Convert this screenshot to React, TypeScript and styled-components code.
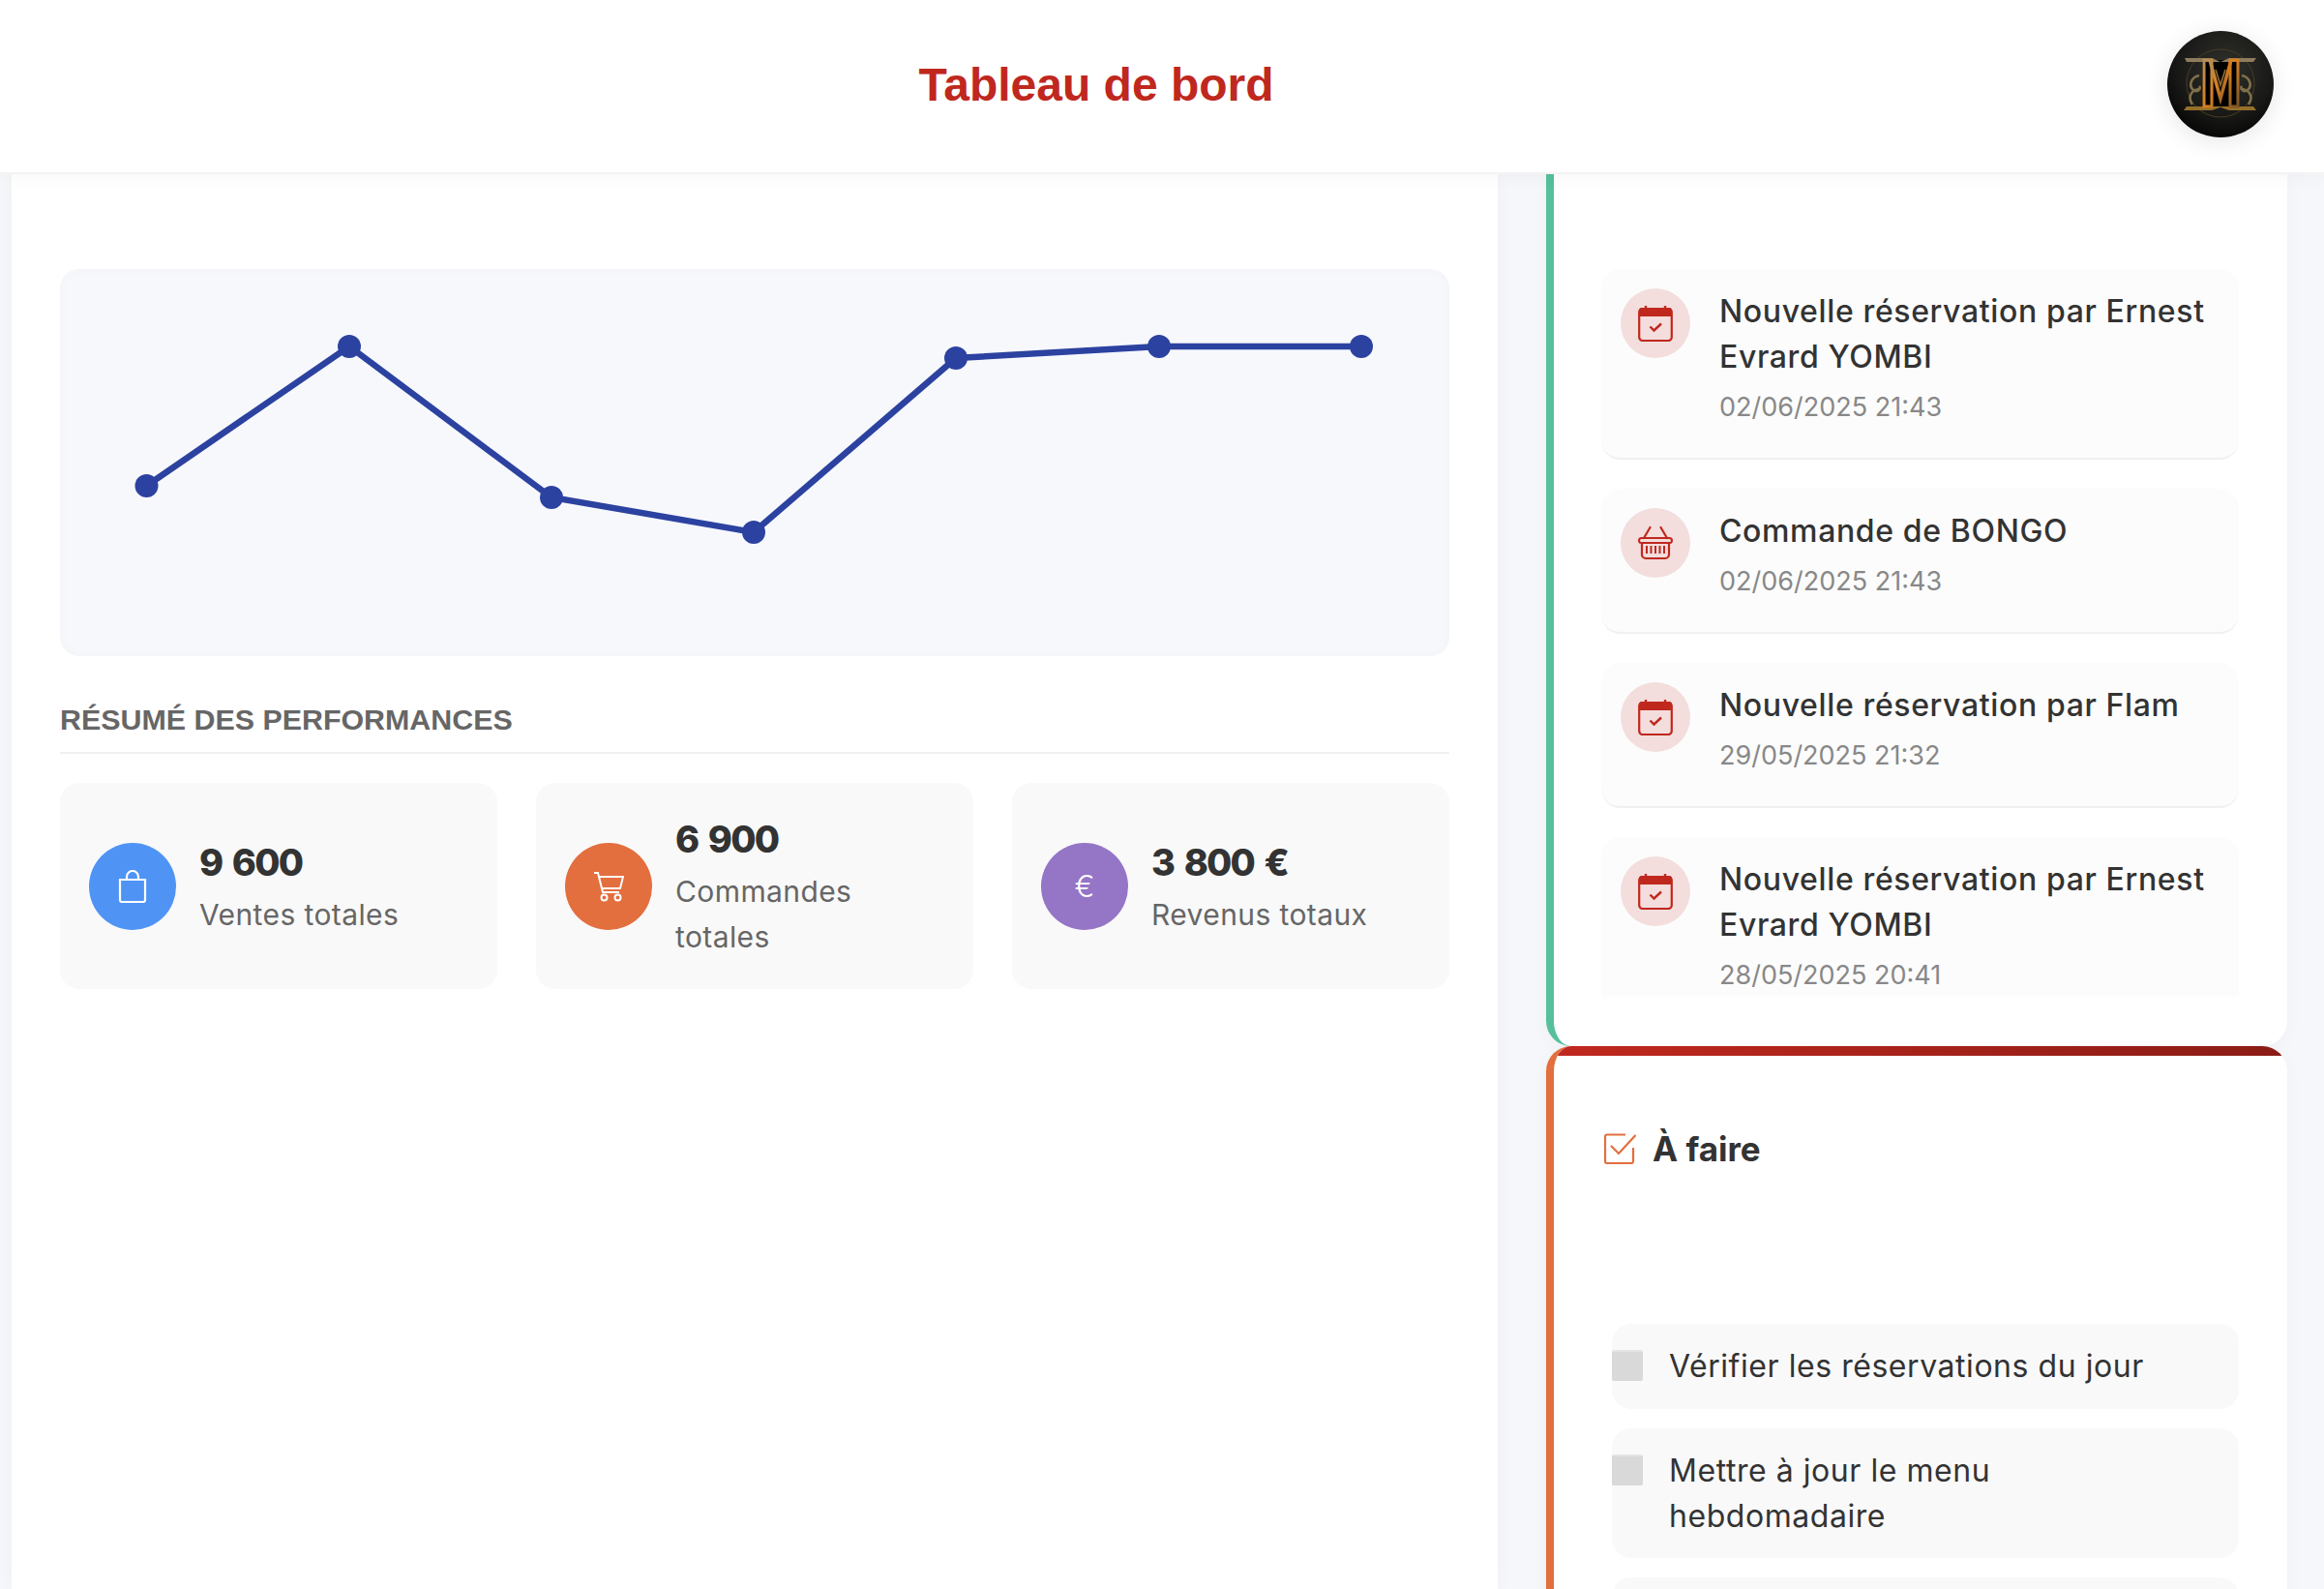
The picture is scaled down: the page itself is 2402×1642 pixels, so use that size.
import React from "react";
import styled, { createGlobalStyle } from "styled-components";

const GlobalStyle = createGlobalStyle`
  * {
    box-sizing: border-box;
  }

  html,
  body {
    margin: 0;
    height: 1642px;
    overflow: hidden;
    background: #f5f7fa;
    font-family: "Inter", "Noto Sans", sans-serif;
  }
`;

const Header = styled.header`
  position: relative;
  z-index: 2;
  display: flex;
  align-items: center;
  height: 180px;
  padding: 0 52px;
  border-bottom: 2px solid #f3f3f3;
  background: #fff;
  box-shadow: 0 2px 20px rgba(0, 0, 0, 0.04);
`;

const PageTitle = styled.h1`
  flex: 1;
  margin: 0 26px 3px 0;
  font-family: "Liberation Sans", Arial, sans-serif;
  font-size: 48px;
  font-weight: 700;
  text-align: center;
  color: #c0281e;
`;

const Avatar = styled.div`
  width: 110px;
  height: 110px;
  margin-bottom: 4px;
  border-radius: 50%;
  box-shadow: 0 4px 24px rgba(0, 0, 0, 0.1);
  overflow: hidden;

  svg {
    display: block;
  }
`;

const Dashboard = styled.main`
  display: grid;
  grid-template-columns: 2fr 1fr;
  gap: 50px;
  padding: 0 38px 0 12px;
`;

const MainPanel = styled.section`
  height: 1462px;
  padding: 98px 50px 0;
  background: #fff;
  box-shadow: 0 4px 20px rgba(0, 0, 0, 0.03);
`;

const ChartBox = styled.div`
  height: 400px;
  border-radius: 20px;
  background: #f7f8fc;
  box-shadow: inset 0 0 12px rgba(0, 0, 0, 0.025);

  svg {
    display: block;
    filter: blur(0.5px);
  }
`;

const SectionTitle = styled.h2`
  margin: 42px 0 30px;
  padding-bottom: 11px;
  border-bottom: 2px solid #f0f0f0;
  font-family: "Liberation Sans", Arial, sans-serif;
  font-size: 30.4px;
  font-weight: 700;
  line-height: 46px;
  text-transform: uppercase;
  color: #666;
`;

const StatGrid = styled.div`
  display: grid;
  grid-template-columns: repeat(3, 1fr);
  gap: 40px;
`;

const StatCard = styled.article`
  display: flex;
  align-items: center;
  gap: 24px;
  padding: 30px;
  border-radius: 20px;
  background: #f9f9f9;
`;

const StatIcon = styled.div<{ $color: string }>`
  display: flex;
  flex: none;
  align-items: center;
  justify-content: center;
  width: 90px;
  height: 90px;
  border-radius: 50%;
  background: ${({ $color }) => $color};
  color: #fff;
  font-size: 31px;
  font-weight: 300;
`;

const StatValue = styled.div`
  margin-bottom: 3px;
  font-size: 38px;
  font-weight: 800;
  line-height: 56px;
  letter-spacing: -1.8px;
  word-spacing: 4px;
  color: #333;
`;

const StatLabel = styled.div`
  max-width: 250px;
  font-size: 30px;
  line-height: 47px;
  letter-spacing: 0.4px;
  color: #666;
`;

const SideColumn = styled.aside`
  display: flex;
  flex-direction: column;
`;

const ActivityPanel = styled.section`
  flex: none;
  height: 901px;
  padding: 98px 50px 0 49px;
  border-left: 8px solid #56c09a;
  border-radius: 0 0 26px 26px;
  background: #fff;
  box-shadow: 0 4px 20px rgba(0, 0, 0, 0.03);
`;

const ActivityList = styled.div`
  display: flex;
  flex-direction: column;
  gap: 30px;
  height: 752px;
  overflow: hidden;
`;

const ActivityItem = styled.article`
  display: flex;
  flex: none;
  gap: 30px;
  padding: 20px 20px 29px;
  border-bottom: 2px solid #f0f0f0;
  border-radius: 20px;
  background: #fcfcfc;
`;

const ActivityIcon = styled.div`
  display: flex;
  flex: none;
  align-items: center;
  justify-content: center;
  width: 72px;
  height: 72px;
  border-radius: 50%;
  background: #f3dddd;
`;

const ActivityTitle = styled.div`
  margin-bottom: 6px;
  font-size: 32px;
  font-weight: 500;
  line-height: 47px;
  letter-spacing: 0.63px;
  color: #333;
`;

const ActivityDate = styled.div`
  font-size: 27px;
  line-height: 46px;
  color: #888;
`;

const TodoPanel = styled.section`
  position: relative;
  flex: 1;
  padding: 78px 50px 0 49px;
  border-left: 8px solid #e36e3e;
  border-radius: 26px 26px 0 0;
  background: #fff;
  overflow: hidden;
  box-shadow: 0 4px 20px rgba(0, 0, 0, 0.03);

  &::before {
    content: "";
    position: absolute;
    top: 0;
    left: 0;
    right: 0;
    height: 10px;
    background: linear-gradient(90deg, #c0281e, #8a1c16);
  }
`;

const TodoHeading = styled.h3`
  display: flex;
  align-items: center;
  gap: 16px;
  height: 56px;
  margin: 0 0 153px 3px;
  font-size: 35px;
  font-weight: 700;
  color: #333;

  svg {
    flex: none;
  }
`;

const TodoList = styled.div`
  display: flex;
  flex-direction: column;
  gap: 20px;
  margin-left: 11px;
`;

const TodoItem = styled.label`
  display: flex;
  gap: 27px;
  min-height: 88px;
  padding: 20px 40px 20px 0;
  border-radius: 20px;
  background: #f9f9f9;
  font-size: 32px;
  line-height: 47px;
  letter-spacing: 0.55px;
  color: #333;
`;

const TodoCheck = styled.input`
  flex: none;
  width: 32px;
  height: 32px;
  margin: 7px 0 0;
  appearance: none;
  border-top: 2px solid #e4e4e4;
  border-radius: 2px;
  background: #d9d9d9;
`;

const chartPoints = [
  [89.5, 224],
  [299, 80],
  [508, 236],
  [717, 272],
  [926, 92],
  [1136, 80],
  [1345, 80],
];

const LineChart = () => (
  <svg width="1436" height="400" viewBox="0 0 1436 400">
    <polyline
      points={chartPoints.map((p) => p.join(",")).join(" ")}
      fill="none"
      stroke="#2c42a0"
      strokeWidth="6.5"
    />
    {chartPoints.map(([x, y]) => (
      <circle key={x} cx={x} cy={y} r="12" fill="#2c42a0" />
    ))}
  </svg>
);

const CalendarIcon = () => (
  <svg width="36" height="38" viewBox="0 0 36 38" fill="none">
    <path d="M8 1v5M28 1v5" stroke="#c0281e" strokeWidth="2.4" />
    <path d="M4 3h28a3 3 0 0 1 3 3v6H1V6a3 3 0 0 1 3-3z" fill="#c0281e" />
    <rect x="1.2" y="4" width="33.6" height="33" rx="3.5" stroke="#c0281e" strokeWidth="2.2" />
    <path d="M12.5 22.5l4 4 7.5-7" stroke="#c0281e" strokeWidth="2.4" />
  </svg>
);

const BasketIcon = () => (
  <svg width="36" height="36" viewBox="0 0 36 36" fill="none" stroke="#c0281e">
    <path d="M6 13L12.500 2M30 13L23.500 2" strokeWidth="2.2" strokeLinecap="round" />
    <rect x="1" y="13" width="34" height="5" rx="2.5" strokeWidth="2" />
    <path d="M4 18v12a4 4 0 0 0 4 4h20a4 4 0 0 0 4-4V18" strokeWidth="2.2" />
    <path d="M9 21v8M13.5 21v8M18 21v8M22.5 21v8M27 21v8" strokeWidth="2" />
  </svg>
);

const BagIcon = () => (
  <svg width="30" height="34" viewBox="0 0 30 34" fill="none" stroke="#fff" strokeWidth="2.2">
    <path d="M2 10h26v21a2 2 0 0 1-2 2H4a2 2 0 0 1-2-2z" />
    <path d="M9 10V7a6 6 0 0 1 12 0v3" />
  </svg>
);

const CartIcon = () => (
  <svg width="32" height="32" viewBox="0 0 32 32" fill="none" stroke="#fff" strokeWidth="2">
    <path d="M1 2h4l5 20h17" />
    <path d="M6 6h25l-3 12H9" />
    <circle cx="11.5" cy="27.5" r="3" />
    <circle cx="25.5" cy="27.5" r="3" />
  </svg>
);

const TodoIcon = () => (
  <svg width="34" height="32" viewBox="0 0 34 32" fill="none" stroke="#e36e3e" strokeWidth="2.2">
    <path d="M22 1.5H3a2 2 0 0 0-2 2V29a2 2 0 0 0 2 2h25a2 2 0 0 0 2-2V15" />
    <path d="M7 13l8 8L32.500 2" />
  </svg>
);

const LogoMark = () => (
  <svg width="110" height="110" viewBox="0 0 110 110">
    <defs>
      <radialGradient id="logoBg" cx="55%" cy="35%" r="70%">
        <stop offset="0%" stopColor="#30302c" />
        <stop offset="65%" stopColor="#181816" />
        <stop offset="100%" stopColor="#040404" />
      </radialGradient>
      <linearGradient id="logoGold" x1="0" y1="0" x2="1" y2="1">
        <stop offset="0%" stopColor="#b58e58" />
        <stop offset="50%" stopColor="#d9801f" />
        <stop offset="100%" stopColor="#7a5224" />
      </linearGradient>
      <filter id="logoSoft">
        <feGaussianBlur stdDeviation="0.5" />
      </filter>
    </defs>
    <rect width="110" height="110" fill="url(#logoBg)" />
    <g filter="url(#logoSoft)">
      <circle cx="55" cy="54" r="35" fill="none" stroke="#4a3d24" strokeWidth="1" />
      <path d="M36 30h38v50H36z" fill="#060605" />
      <path d="M18 28h28l9 4 9-4h28l-3 4H20z" fill="#8f7c5c" />
      <path d="M17 82h29l9-3 9 3h28l-3-4H20z" fill="#96702c" />
      <path d="M38 30h8v48h-8zM65 30h8v48h-8z" fill="none" stroke="url(#logoGold)" strokeWidth="3" />
      <path d="M44 30l11 40 11-40" fill="none" stroke="url(#logoGold)" strokeWidth="3.4" />
      <path d="M50 40l5 16 5-16" fill="none" stroke="#8f6a34" strokeWidth="1.6" />
      <path
        d="M33 46c-9 2-11 11-6 15 4 3 8-1 6-4M33 60c-9 1-12 9-7 16M77 46c9 2 11 11 6 15-4 3-8-1-6-4M77 60c9 1 12 9 7 16"
        fill="none"
        stroke="#7f6f49"
        strokeWidth="2.6"
      />
    </g>
  </svg>
);

const activities = [
  { id: 1, title: "Nouvelle réservation par Ernest Evrard YOMBI", date: "02/06/2025 21:43", icon: <CalendarIcon /> },
  { id: 2, title: "Commande de BONGO", date: "02/06/2025 21:43", icon: <BasketIcon /> },
  { id: 3, title: "Nouvelle réservation par Flam", date: "29/05/2025 21:32", icon: <CalendarIcon /> },
  { id: 4, title: "Nouvelle réservation par Ernest Evrard YOMBI", date: "28/05/2025 20:41", icon: <CalendarIcon /> },
];

const stats = [
  { value: "9 600", label: "Ventes totales", color: "#4f94f5", icon: <BagIcon /> },
  { value: "6 900", label: "Commandes totales", color: "#e36e3e", icon: <CartIcon /> },
  { value: "3 800 €", label: "Revenus totaux", color: "#9575c6", icon: "€" },
];

const todos = ["Vérifier les réservations du jour", "Mettre à jour le menu hebdomadaire", ""];

const App: React.FC = () => {
  return (
    <>
      <GlobalStyle />
      <Header>
        <PageTitle>Tableau de bord</PageTitle>
        <Avatar>
          <LogoMark />
        </Avatar>
      </Header>
      <Dashboard>
        <MainPanel>
          <ChartBox>
            <LineChart />
          </ChartBox>
          <SectionTitle>Résumé des performances</SectionTitle>
          <StatGrid>
            {stats.map((stat) => (
              <StatCard key={stat.label}>
                <StatIcon $color={stat.color}>{stat.icon}</StatIcon>
                <div>
                  <StatValue>{stat.value}</StatValue>
                  <StatLabel>{stat.label}</StatLabel>
                </div>
              </StatCard>
            ))}
          </StatGrid>
        </MainPanel>
        <SideColumn>
          <ActivityPanel>
            <ActivityList>
              {activities.map((item) => (
                <ActivityItem key={item.id}>
                  <ActivityIcon>{item.icon}</ActivityIcon>
                  <div>
                    <ActivityTitle>{item.title}</ActivityTitle>
                    <ActivityDate>{item.date}</ActivityDate>
                  </div>
                </ActivityItem>
              ))}
            </ActivityList>
          </ActivityPanel>
          <TodoPanel>
            <TodoHeading>
              <TodoIcon />À faire
            </TodoHeading>
            <TodoList>
              {todos.map((todo, i) => (
                <TodoItem key={i}>
                  <TodoCheck type="checkbox" />
                  <span>{todo}</span>
                </TodoItem>
              ))}
            </TodoList>
          </TodoPanel>
        </SideColumn>
      </Dashboard>
    </>
  );
};

export default App;
